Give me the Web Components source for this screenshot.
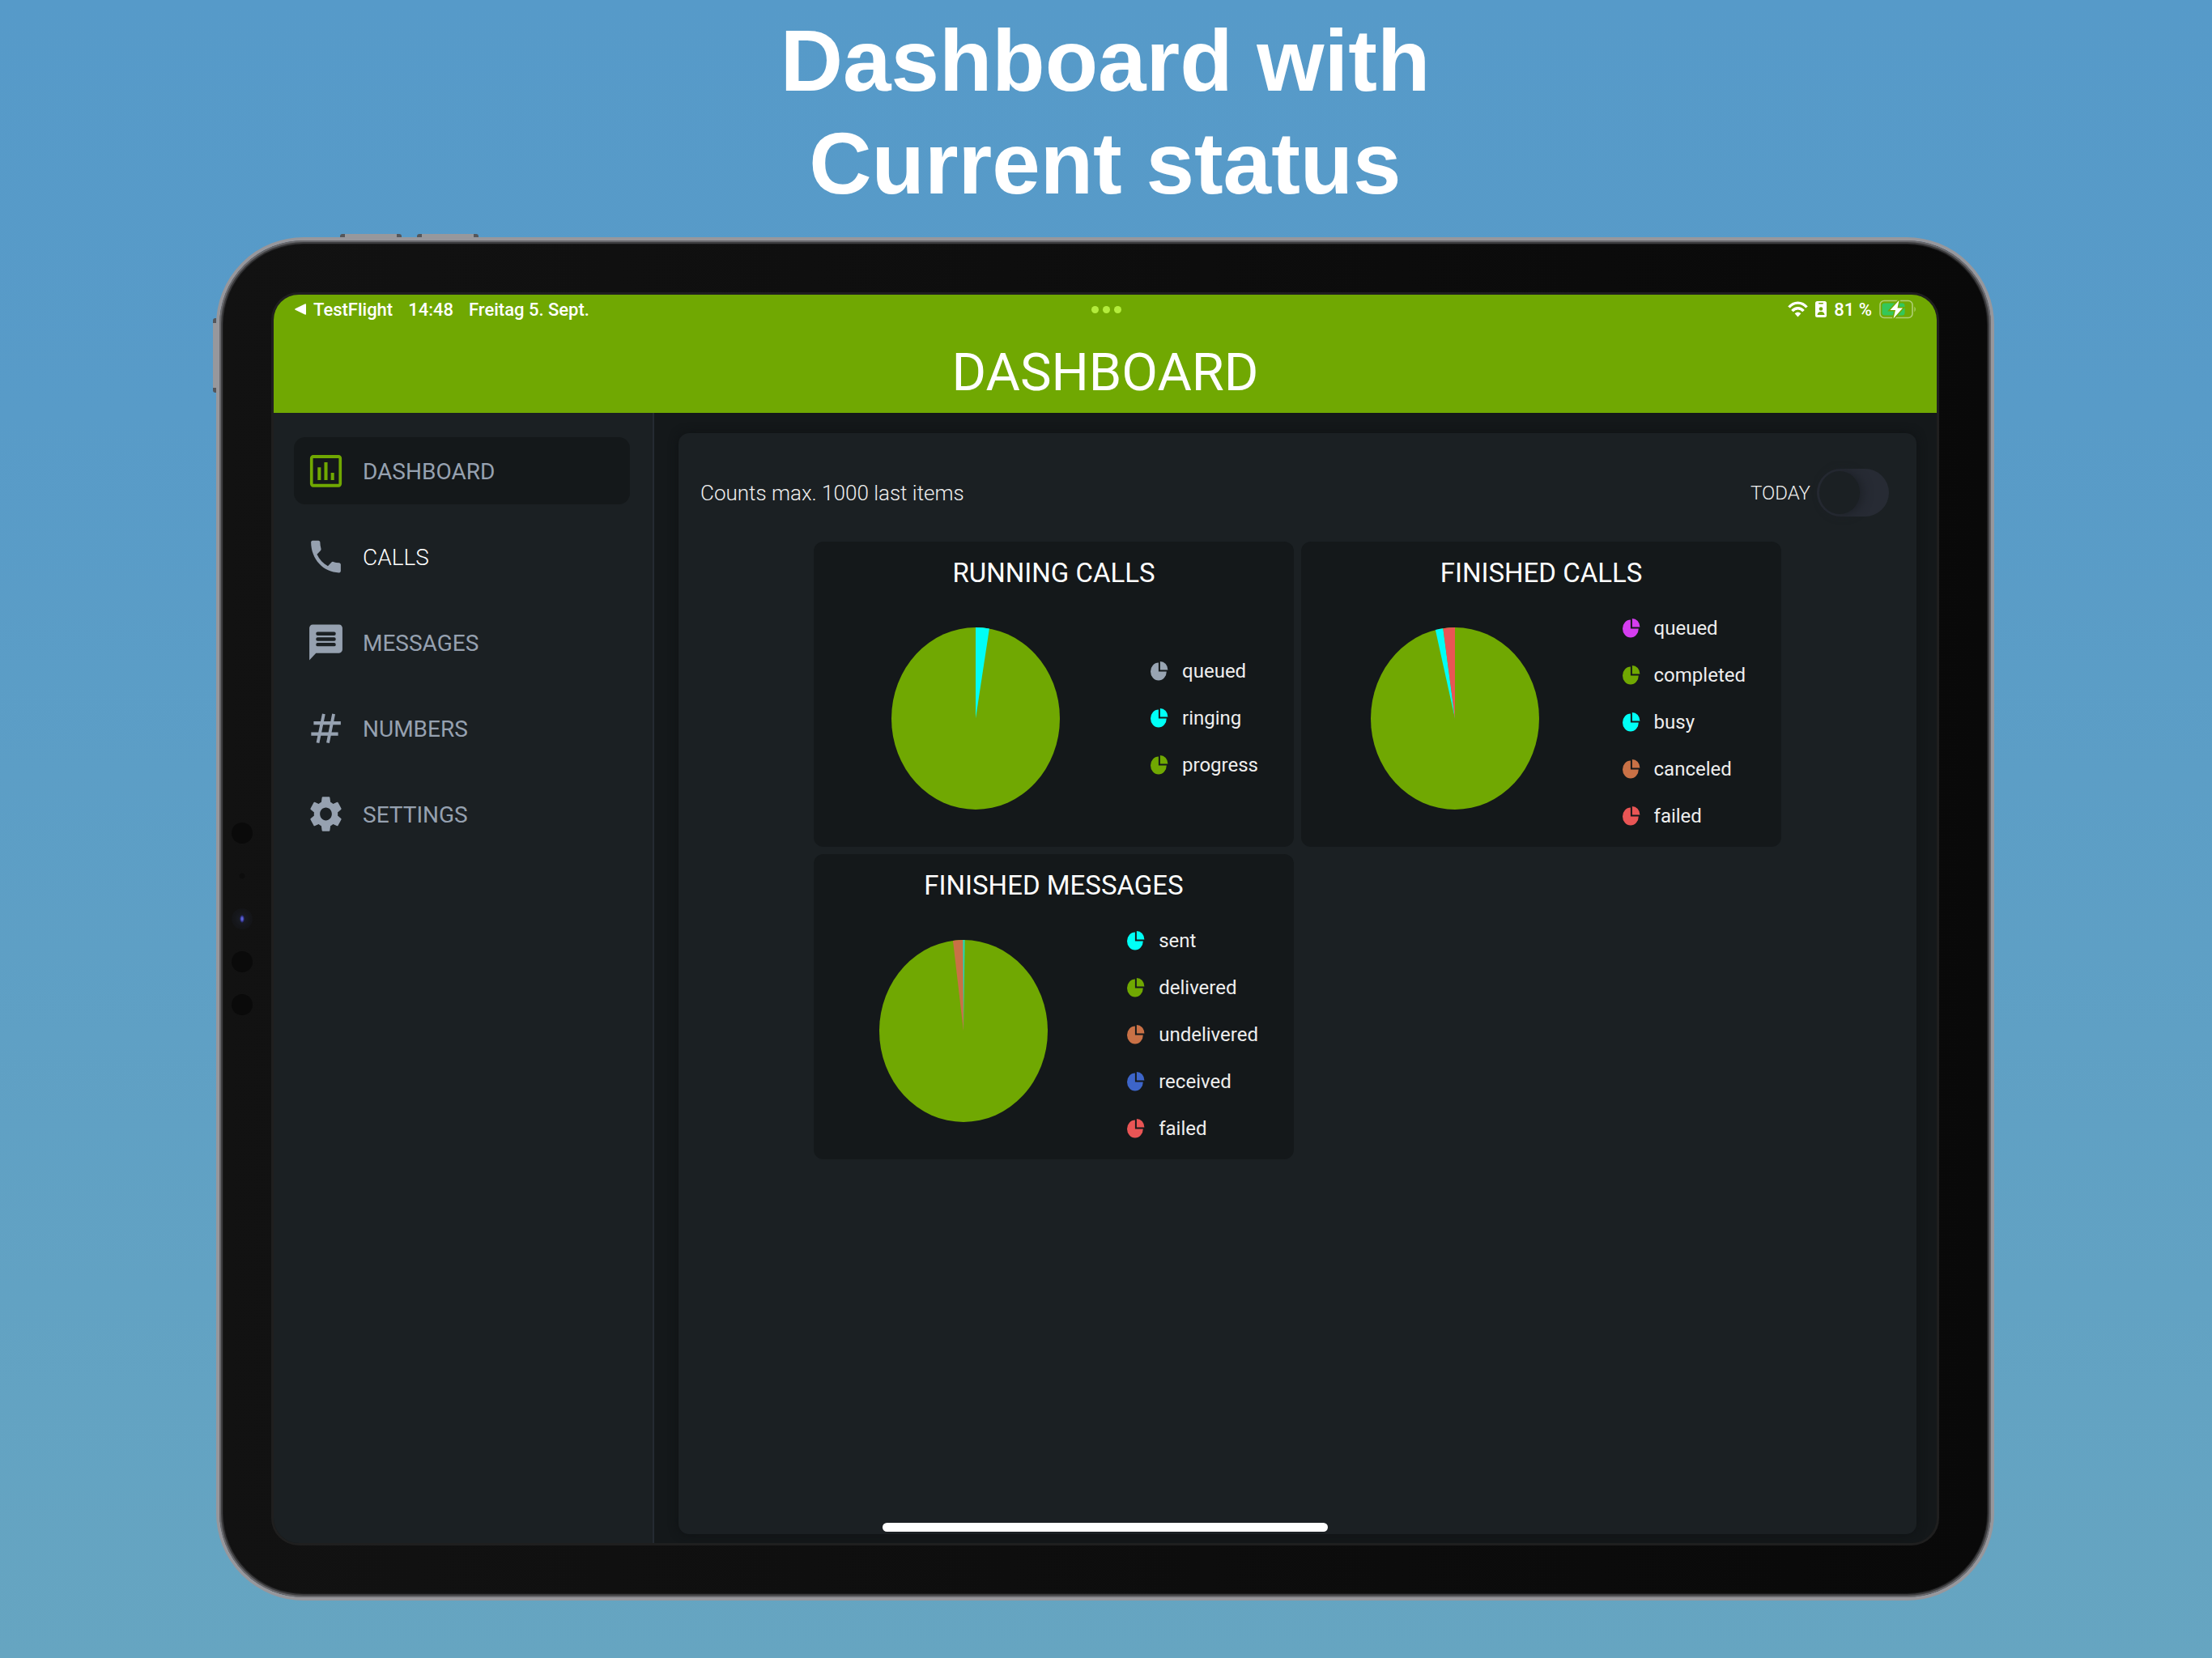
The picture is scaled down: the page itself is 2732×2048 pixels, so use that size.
<!DOCTYPE html>
<html lang="en">
<head>
<meta charset="utf-8">
<meta name="viewport" content="width=device-width, initial-scale=1">
<title>Dashboard</title>
<style>
  body {
    margin: 0;
    font-family: Roboto, "Liberation Sans", sans-serif;
    color: #fff;
    background: #5f9fc6;
    --green: #70a802;
    --surface: #1b2023;
    --sunken: #14181a;
    --muted: #96a1b0;
  }
</style>
</head>
<body>
<promo-page>
  <span slot="title">Dashboard with<br>Current status</span>
  <tablet-frame>
    <status-bar slot="header"></status-bar>
    <app-header slot="header">DASHBOARD</app-header>
    <side-nav slot="body">
      <nav-item icon="chart" href="#dashboard" active>DASHBOARD</nav-item>
      <nav-item icon="phone" href="#calls" bright>CALLS</nav-item>
      <nav-item icon="message" href="#messages">MESSAGES</nav-item>
      <nav-item icon="hash" href="#numbers">NUMBERS</nav-item>
      <nav-item icon="gear" href="#settings">SETTINGS</nav-item>
    </side-nav>
    <content-panel slot="body">
      <span slot="info">Counts max. 1000 last items</span>
      <toggle-switch slot="action" label="TODAY"></toggle-switch>
      <pie-card slices="#00fff6 0 2.6">
        <span slot="title">RUNNING CALLS</span>
        <legend-item color="#98a4b2">queued</legend-item>
        <legend-item color="#00fff6">ringing</legend-item>
        <legend-item color="#70a802">progress</legend-item>
      </pie-card>
      <pie-card slices="#00fff6 96.27 97.75, #e95555 97.75 100">
        <span slot="title">FINISHED CALLS</span>
        <legend-item color="#d53df0">queued</legend-item>
        <legend-item color="#70a802">completed</legend-item>
        <legend-item color="#00fff6">busy</legend-item>
        <legend-item color="#c97146">canceled</legend-item>
        <legend-item color="#e95555">failed</legend-item>
      </pie-card>
      <pie-card slices="#c97146 98 100, #1fdcb4 99.9 100.25">
        <span slot="title">FINISHED MESSAGES</span>
        <legend-item color="#00fff6">sent</legend-item>
        <legend-item color="#70a802">delivered</legend-item>
        <legend-item color="#c97146">undelivered</legend-item>
        <legend-item color="#3d65c9">received</legend-item>
        <legend-item color="#e95555">failed</legend-item>
      </pie-card>
    </content-panel>
  </tablet-frame>
</promo-page>

<script>
(() => {
  const define = (name, render) => {
    customElements.define(
      name,
      class extends HTMLElement {
        constructor() {
          super();
          this.attachShadow({ mode: "open" });
        }

        connectedCallback() {
          this.shadowRoot.innerHTML = render(this);
        }
      }
    );
  };

  define("promo-page", () => /* html */ `
    <style>
      :host {
        display: flex;
        flex-direction: column;
        box-sizing: border-box;
        min-height: 100vh;
        padding: 12px 269px 71px 267px;
        background: linear-gradient(#569ac9, #589bc8 25%, #66a5c1);
      }

      h1 {
        margin: 0 0 27px;
        font: bold 107px/127px "Liberation Sans", Arial, sans-serif;
        text-align: center;
      }

      ::slotted(tablet-frame) {
        flex: 1;
      }
    </style>

    <h1><slot name="title"></slot></h1>
    <slot></slot>
  `);

  define("tablet-frame", () => /* html */ `
    <style>
      :host {
        position: relative;
        display: flex;
        box-sizing: border-box;
        padding: 64px;
        border: 4px solid #97979c;
        border-radius: 108px;
        background: linear-gradient(90deg, #121212, #090909) padding-box;
        box-shadow: inset 0 0 0 2px #68686c, inset 0 0 0 4px #3c3c3e, inset 0 0 1px 5px #1c1c1d;
      }

      .screen {
        position: relative;
        display: flex;
        flex-direction: column;
        flex: 1;
        overflow: hidden;
        border: 3px solid #1f1f1f;
        border-radius: 34px;
        background: var(--sunken);
      }

      header {
        background: var(--green);
      }

      .body {
        display: flex;
        flex: 1;
      }

      .home {
        position: absolute;
        left: 0;
        right: 0;
        bottom: 14px;
        width: 550px;
        height: 11px;
        margin: 0 auto;
        border-radius: 6px;
        background: #fff;
      }

      .key {
        position: absolute;
        box-sizing: border-box;
        background: #97989c;
        border: 0 solid #55565a;
      }

      .key.volume {
        top: -8px;
        width: 76px;
        height: 4px;
        border-width: 0 6px;
        border-radius: 3px 3px 0 0;
      }

      .up {
        left: 149px;
      }

      .down {
        left: 244px;
      }

      .key.power {
        top: 96px;
        left: -8px;
        width: 4px;
        height: 92px;
        border-width: 6px 0;
        border-radius: 3px 0 0 3px;
      }

      .sensors {
        position: absolute;
        top: 0;
        bottom: 0;
        left: 15px;
        display: flex;
        flex-direction: column;
        justify-content: center;
        gap: 27px;
      }

      .sensors i {
        width: 26px;
        height: 26px;
        border-radius: 50%;
        background: #0a0a0a;
      }

      .sensors .mic {
        background: radial-gradient(circle, #0d0d0d 3px, transparent 4px);
      }

      .sensors .camera {
        background: radial-gradient(ellipse 3px 5px, #5b62d8 30%, #26266a 80%, transparent),
          radial-gradient(circle, #1a1d26 2px, #15161a 9px, #121314);
      }
    </style>

    <i class="key volume up"></i>
    <i class="key volume down"></i>
    <i class="key power"></i>
    <div class="sensors"><i></i><i class="mic"></i><i class="camera"></i><i></i><i></i></div>
    <div class="screen">
      <header><slot name="header"></slot></header>
      <div class="body"><slot name="body"></slot></div>
      <div class="home"></div>
    </div>
  `);

  define("status-bar", () => /* html */ `
    <style>
      :host {
        display: grid;
        grid-template-columns: 1fr auto 1fr;
        align-items: center;
        height: 36px;
        padding: 0 24px 0 26px;
        font-size: 22px;
        font-weight: 500;
      }

      div {
        display: flex;
        align-items: center;
      }

      .left {
        gap: 19px;
      }

      .back {
        gap: 9px;
      }

      .dots {
        gap: 5px;
      }

      .dots i {
        width: 9px;
        height: 9px;
        border-radius: 50%;
        background: #b3ec3c;
      }

      .right {
        justify-content: flex-end;
        gap: 9px;
      }
    </style>

    <div class="left">
      <div class="back">
        <svg width="14" height="14" viewBox="0 0 14 14" fill="#fff"><path d="M12.5 .4Q14 -.3 14 1.2V12.8Q14 14.3 12.5 13.6L.7 7.8Q-.4 7 .7 6.2z"/></svg>
        <span>TestFlight</span>
      </div>
      <span>14:48</span>
      <span>Freitag 5. Sept.</span>
    </div>
    <div class="dots"><i></i><i></i><i></i></div>
    <div class="right">
      <svg width="25" height="20" viewBox="0 0 25 20" fill="none" stroke="#fff" stroke-width="3.4">
        <path d="M1.5 7.5C7.5 .3 17.5 .3 23.5 7.5"/>
        <path d="M5.5 12.2C9.5 7.5 15.5 7.5 19.5 12.2"/>
        <path d="M12.5 19.5L8.6 15.3Q12.5 11.7 16.4 15.3z" fill="#fff" stroke="none"/>
      </svg>
      <svg width="14" height="20" viewBox="0 0 14 20">
        <rect width="14" height="20" rx="2.5" fill="#fff"/>
        <rect x="4" y="2" width="6" height="1.6" rx=".8" fill="#70a802"/>
        <circle cx="7" cy="9.5" r="2.3" fill="#70a802"/>
        <path d="M2.5 17Q3 13 7 13T11.5 17z" fill="#70a802"/>
      </svg>
      <span>81 %</span>
      <svg width="47" height="24" viewBox="0 0 47 24">
        <rect x="1" y="1.5" width="40" height="21" rx="5" fill="none" stroke="#fff" stroke-opacity=".45" stroke-width="1.6"/>
        <path d="M43.5 8.5Q46 12 43.5 15.5z" fill="#fff" fill-opacity=".5"/>
        <rect x="3.5" y="4.500" width="28" height="15" rx="3" fill="#34c75a"/>
        <path d="M24.5 1L13.5 13H20L17.5 23.5L29 10.5H22.5z" fill="#fff" stroke="#70a802" stroke-width="3" paint-order="stroke"/>
      </svg>
    </div>
  `);

  define("app-header", () => /* html */ `
    <style>
      :host {
        display: block;
      }

      h2 {
        margin: 0;
        padding: 20px 0 10px;
        font-size: 65px;
        font-weight: 400;
        line-height: 80px;
        text-align: center;
      }
    </style>

    <h2><slot></slot></h2>
  `);

  define("side-nav", () => /* html */ `
    <style>
      :host {
        box-sizing: border-box;
        flex: 0 0 470px;
        padding: 30px 28px 30px 25px;
        border-right: 2px solid #252b32;
        background: var(--surface);
      }

      nav {
        display: flex;
        flex-direction: column;
        gap: 23px;
      }
    </style>

    <nav><slot></slot></nav>
  `);

  const icons = {
    chart: `
      <rect x="3.3" y="4.1" width="17.4" height="16.2" rx="1" fill="none" stroke="currentColor" stroke-width="1.8"/>
      <path d="M7 10.1h2v7.1H7zM11 7.2h2v10h-2zM15 13.1h2v4.1h-2z"/>`,
    phone: `
      <path d="M20 15.5c-1.25 0-2.45-.2-3.57-.57-.35-.11-.74-.03-1.02.24l-2.2 2.2c-2.83-1.44-5.15-3.75-6.59-6.59l2.2-2.21c.28-.26.36-.65.25-1C8.7 6.45 8.5 5.25 8.5 4c0-.55-.45-1-1-1H4c-.55 0-1 .45-1 1 0 9.39 7.61 17 17 17 .55 0 1-.45 1-1v-3.5c0-.55-.45-1-1-1z"/>`,
    message: `
      <path d="M20 2H4c-1.1 0-2 .9-2 2v18l4-4h14c1.1 0 2-.9 2-2V4c0-1.1-.9-2-2-2z"/>
      <path d="M7 7.1h10M7 10.2h10M7 13.2h10" stroke="#1b2023" stroke-width="2" stroke-linecap="round"/>`,
    hash: `
      <path d="M10.7 4L7.1 20.2M16.7 4L13.2 20.2M4.6 9.1H21M3.1 15.2H19.4" stroke="currentColor" stroke-width="1.9"/>`,
    gear: `
      <path d="M19.14 12.94c.04-.3.06-.61.06-.94 0-.32-.02-.64-.07-.94l2.03-1.58c.18-.14.23-.41.12-.61l-1.92-3.32c-.12-.22-.37-.29-.59-.22l-2.39.96c-.5-.38-1.03-.7-1.62-.94l-.36-2.54c-.04-.24-.24-.41-.48-.41h-3.84c-.24 0-.43.17-.47.41l-.36 2.54c-.59.24-1.13.57-1.62.94l-2.39-.96c-.22-.08-.47 0-.59.22L2.74 8.87c-.12.21-.08.47.12.61l2.03 1.58c-.05.3-.09.63-.09.94s.02.64.07.94l-2.03 1.58c-.18.14-.23.41-.12.61l1.92 3.32c.12.22.37.29.59.22l2.39-.96c.5.38 1.03.7 1.62.94l.36 2.54c.05.24.24.41.48.41h3.84c.24 0 .44-.17.47-.41l.36-2.54c.59-.24 1.13-.56 1.62-.94l2.39.96c.22.08.47 0 .59-.22l1.92-3.32c.12-.22.07-.47-.12-.61l-2.01-1.58zM12 15.6c-1.98 0-3.6-1.62-3.6-3.6s1.62-3.6 3.6-3.6 3.6 1.62 3.6 3.6-1.62 3.6-3.6 3.6z"/>`,
  };

  define("nav-item", (el) => /* html */ `
    <style>
      :host {
        display: block;
      }

      a {
        display: flex;
        align-items: center;
        gap: 21px;
        height: 83px;
        padding: 0 15px;
        border-radius: 14px;
        color: var(--muted);
        font-size: 28px;
        text-decoration: none;
      }

      svg {
        width: 49px;
        height: 53px;
      }

      span {
        padding-top: 2px;
      }

      :host([active]) a {
        background: var(--sunken);
      }

      :host([active]) svg {
        color: var(--green);
      }

      :host([bright]) span {
        color: #fff;
        font-weight: 300;
      }
    </style>

    <a href="${el.getAttribute("href")}">
      <svg viewBox="0 0 24 24" preserveAspectRatio="none" fill="currentColor">${icons[el.getAttribute("icon")]}</svg>
      <span><slot></slot></span>
    </a>
  `);

  define("content-panel", () => /* html */ `
    <style>
      :host {
        display: flex;
        flex: 1;
        padding: 25px 25px 11px 30px;
      }

      section {
        flex: 1;
        padding-top: 44px;
        border-radius: 13px;
        background: var(--surface);
        box-shadow: 0 0 12px #0f1214;
      }

      .toolbar {
        display: flex;
        align-items: center;
        justify-content: space-between;
        margin-bottom: 31px;
        padding: 0 34px 0 27px;
        color: #eee;
        font-size: 26px;
        font-weight: 300;
      }

      .cards {
        display: grid;
        grid-template-columns: repeat(auto-fit, 593px);
        justify-content: center;
        gap: 9px;
      }
    </style>

    <section>
      <div class="toolbar">
        <slot name="info"></slot>
        <slot name="action"></slot>
      </div>
      <div class="cards"><slot></slot></div>
    </section>
  `);

  define("toggle-switch", (el) => /* html */ `
    <style>
      :host {
        display: block;
      }

      label {
        display: flex;
        align-items: center;
        gap: 8px;
        font-size: 24px;
      }

      input {
        appearance: none;
        width: 89px;
        height: 59px;
        margin: 0;
        padding: 3px;
        box-sizing: border-box;
        border-radius: 30px;
        background: #272b34;
      }

      input::before {
        content: "";
        display: block;
        width: 50px;
        height: 53px;
        border-radius: 50%;
        background: var(--surface);
        box-shadow: 4px 0 12px #1d2127;
      }

      input:checked::before {
        margin-left: auto;
      }
    </style>

    <label>${el.getAttribute("label")} <input type="checkbox" role="switch"></label>
  `);

  // Point on the unit circle, percent counted clockwise from the top
  const point = (percent) => {
    const angle = (percent / 100) * 2 * Math.PI;
    return `${Math.sin(angle).toFixed(4)} ${(-Math.cos(angle)).toFixed(4)}`;
  };

  const slice = (text) => {
    const [color, from, to] = text.trim().split(" ");
    return `<path fill="${color}" d="M0 0L${point(from)}A1 1 0 0 1 ${point(to)}z"/>`;
  };

  define("pie-card", (el) => /* html */ `
    <style>
      :host {
        display: block;
        padding-bottom: 19px;
        border-radius: 12px;
        background: var(--sunken);
      }

      h3 {
        margin: 0;
        font-size: 33px;
        font-weight: 400;
        line-height: 78px;
        text-align: center;
      }

      .body {
        display: flex;
        align-items: safe center;
        height: 280px;
        padding-right: 44px;
      }

      .chart {
        display: flex;
        flex: 1;
        justify-content: center;
      }

      .legend {
        padding-left: 17px;
      }
    </style>

    <h3><slot name="title"></slot></h3>
    <div class="body">
      <div class="chart">
        <svg width="208" height="225" viewBox="-1 -1 2 2" preserveAspectRatio="none">
          <circle r="1" fill="#70a802"/>
          ${el.getAttribute("slices").split(",").map(slice).join("")}
        </svg>
      </div>
      <div class="legend"><slot></slot></div>
    </div>
  `);

  define("legend-item", (el) => /* html */ `
    <style>
      :host {
        display: flex;
        align-items: center;
        gap: 17px;
        height: 58px;
        color: #eee;
        font-size: 24px;
      }
    </style>

    <svg width="22" height="24" viewBox="0 0 22 24" fill="${el.getAttribute("color")}">
      <path d="M9.9 1.6A9.9 10.9 0 1 0 19.8 12.5H9.9z"/>
      <path d="M11.9 0V10.5H21.4A9.5 10.5 0 0 0 11.9 0z"/>
    </svg>
    <slot></slot>
  `);
})();
</script>
</body>
</html>
